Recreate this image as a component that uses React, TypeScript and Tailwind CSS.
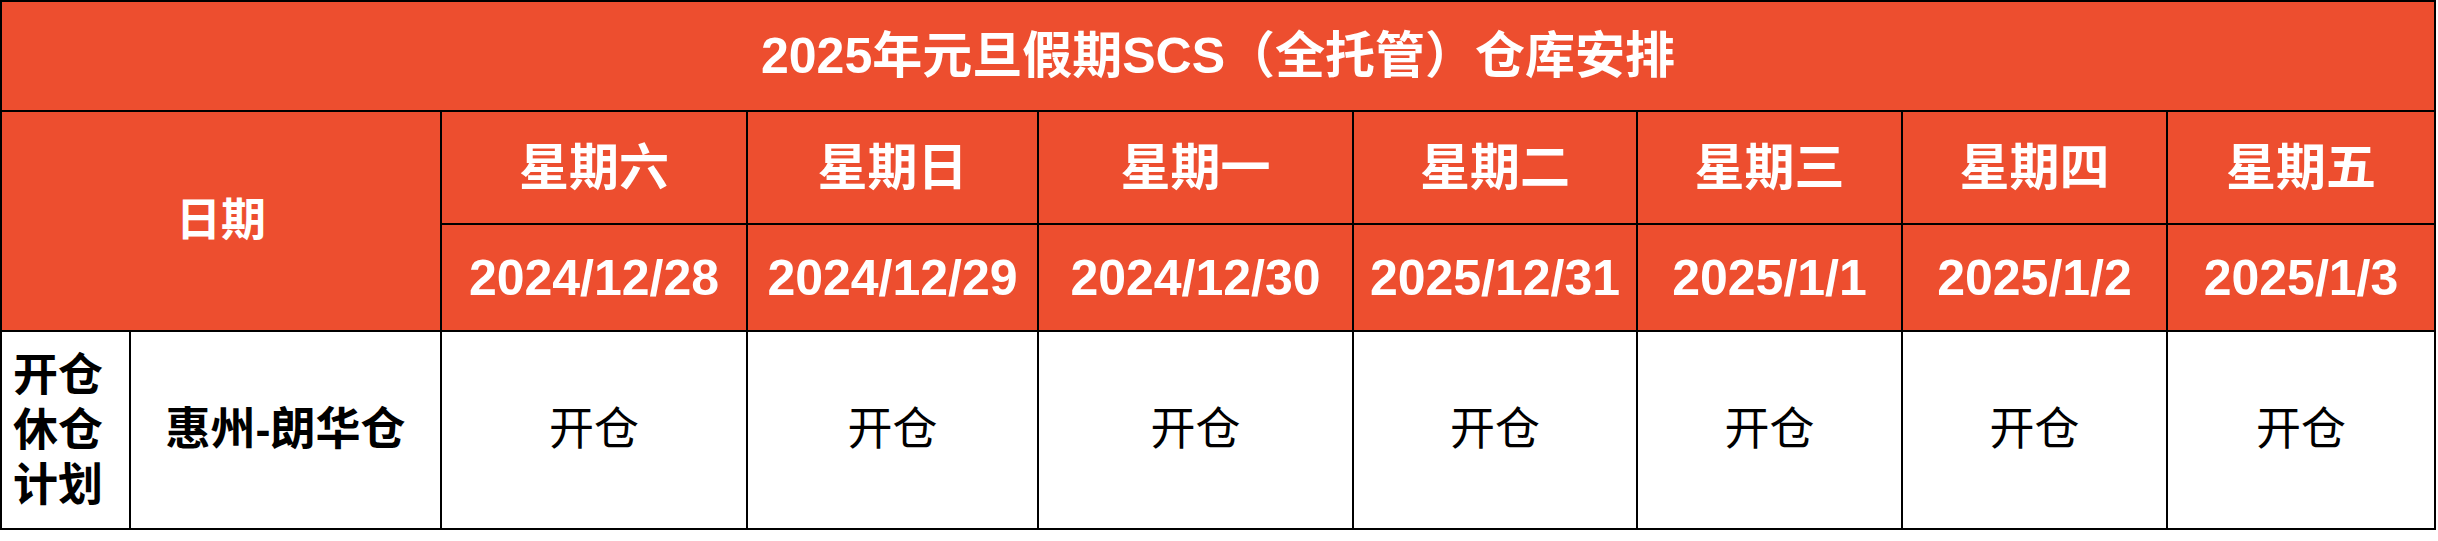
import type { ReactNode } from 'react'

const days = [
  { week: '星期六', date: '2024/12/28', status: '开仓' },
  { week: '星期日', date: '2024/12/29', status: '开仓' },
  { week: '星期一', date: '2024/12/30', status: '开仓' },
  { week: '星期二', date: '2025/12/31', status: '开仓' },
  { week: '星期三', date: '2025/1/1', status: '开仓' },
  { week: '星期四', date: '2025/1/2', status: '开仓' },
  { week: '星期五', date: '2025/1/3', status: '开仓' },
]

// column widths between grid lines, taken from the sheet
const colWidths = [129, 311, 306, 291, 315, 284, 265, 265, 268]

const font = "font-['Liberation_Sans','Noto_Sans_CJK_SC',sans-serif]"

function HeadCell({
  children,
  className = '',
  colSpan,
}: {
  children: ReactNode
  className?: string
  colSpan?: number
}) {
  return (
    <td
      colSpan={colSpan}
      className={`border-2 border-black bg-[#ED4E2F] p-0 text-center align-middle text-white ${className}`}
    >
      {children}
    </td>
  )
}

export default function App() {
  return (
    <div className={`min-h-[541px] w-[2438px] bg-white ${font}`}>
      <table className="w-[2436px] table-fixed border-collapse">
        <colgroup>
          {colWidths.map((w, i) => (
            <col key={i} style={{ width: w }} />
          ))}
        </colgroup>
        <tbody>
          <tr className="h-[110px]">
            <HeadCell colSpan={9} className="text-[50px] font-bold leading-none">
              2025年元旦假期SCS（全托管）仓库安排
            </HeadCell>
          </tr>
          <tr className="h-[113px]">
            <td
              rowSpan={2}
              colSpan={2}
              className="border-2 border-black bg-[#ED4E2F] p-0 text-center align-middle text-[45px] font-bold text-white"
            >
              日期
            </td>
            {days.map((d) => (
              <HeadCell key={d.week} className="text-[50px] font-bold leading-none">
                {d.week}
              </HeadCell>
            ))}
          </tr>
          <tr className="h-[107px]">
            {days.map((d) => (
              <HeadCell key={d.date} className="text-[50px] font-bold leading-none">
                {d.date}
              </HeadCell>
            ))}
          </tr>
          <tr className="h-[198px]">
            <td className="border-2 border-black p-0 pl-[11px] text-left align-middle text-[45px] font-bold leading-[55px] text-black">
              开仓
              <br />
              休仓
              <br />
              计划
            </td>
            <td className="border-2 border-black p-0 text-center align-middle text-[45px] font-bold text-black">
              惠州-朗华仓
            </td>
            {days.map((d) => (
              <td
                key={d.date}
                className="border-2 border-black p-0 text-center align-middle text-[45px] text-black"
              >
                {d.status}
              </td>
            ))}
          </tr>
        </tbody>
      </table>
    </div>
  )
}
